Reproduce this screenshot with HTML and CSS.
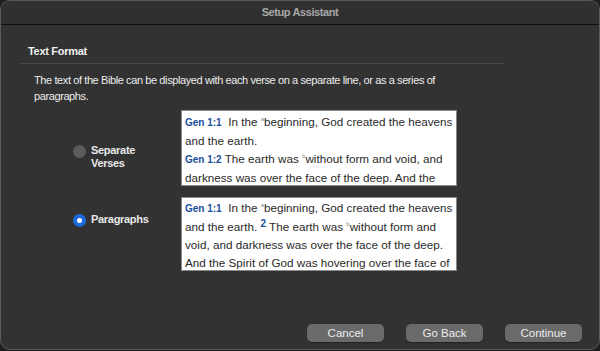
FILE: index.html
```html
<!DOCTYPE html>
<html lang="en">
<head>
    <meta charset="UTF-8">
    <title>Setup Assistant</title>
    <link rel="stylesheet" href="styles.css">
</head>
<body>
    <!-- Setup assistant window -->
    <div class="window">
        <div class="titlebar">Setup Assistant</div>

        <div class="content">
            <h2 class="section-title">Text Format</h2>
            <p class="intro">The text of the Bible can be displayed with each verse on a separate line, or as a series of paragraphs.</p>

            <!-- Format choices -->
            <div class="option">
                <label class="radio radio-verses">
                    <span class="radio-dot"></span>
                    <span class="radio-label">Separate<br>Verses</span>
                </label>
                <div class="preview">
                    <p><span class="ref">Gen 1:1</span>&nbsp; In the <sup>a</sup>beginning, God created the heavens<br>and the earth.</p>
                    <p><span class="ref">Gen 1:2</span> The earth was <sup>b</sup>without form and void, and<br>darkness was over the face of the deep. And the</p>
                </div>
            </div>

            <div class="option">
                <label class="radio radio-paragraphs">
                    <span class="radio-dot checked"></span>
                    <span class="radio-label">Paragraphs</span>
                </label>
                <div class="preview preview-short">
                    <p><span class="ref">Gen 1:1</span>&nbsp; In the <sup>a</sup>beginning, God created the heavens<br>and the earth. <span class="num">2</span> The earth was <sup>b</sup>without form and<br>void, and darkness was over the face of the deep.<br>And the Spirit of God was hovering over the face of</p>
                </div>
            </div>
        </div>

        <!-- Bottom buttons -->
        <div class="buttons">
            <button class="btn">Cancel</button>
            <button class="btn">Go Back</button>
            <button class="btn">Continue</button>
        </div>
    </div>
</body>
</html>
```

FILE: styles.css
```css
/* Page setup */
html, body {
    margin: 0;
    padding: 0;
    background-color: #1e1e1e;
}

body {
    font-family: "Liberation Sans", Arial, sans-serif;
    width: 600px;
    height: 351px;
    overflow: hidden;
}

/* Window frame */
.window {
    box-sizing: border-box;
    width: 600px;
    height: 350px;
    background-color: #323232;
    border: 1px solid #5a5a5a;
    border-radius: 10px;
    display: flex;
    flex-direction: column;
    overflow: hidden;
}

/* Title bar */
.titlebar {
    height: 23px;
    line-height: 23px;
    text-align: center;
    font-size: 11px;
    font-weight: bold;
    letter-spacing: -0.4px;
    color: #a8a8a8;
    background-color: #303030;
    border-bottom: 1px solid #101010;
}

/* Main content */
.content {
    flex: 1;
    padding: 0 94px 0 18px;
}

.section-title {
    margin: 19px 0 0 0;
    padding: 0 0 5px 9px;
    font-size: 11px;
    line-height: 14px;
    font-weight: bold;
    letter-spacing: -0.3px;
    color: #f0f0f0;
    border-bottom: 1px solid #474747;
}

.intro {
    max-width: 410px;
    margin: 8px 0 0 15px;
    font-size: 11px;
    line-height: 16px;
    letter-spacing: -0.4px;
    color: #ececec;
}

/* Option rows */
.option {
    display: flex;
    align-items: flex-start;
    margin-top: 6px;
}

.option + .option {
    margin-top: 11px;
}

.radio {
    display: flex;
    align-items: flex-start;
    width: 90px;
    margin-left: 54px;
    margin-right: 18px;
}

.radio-verses {
    margin-top: 34px;
}

.radio-paragraphs {
    margin-top: 16px;
}

.radio-dot {
    box-sizing: border-box;
    width: 13px;
    height: 13px;
    margin-top: 1px;
    border-radius: 50%;
    background-color: #5c5c5c;
    margin-right: 5px;
    flex-shrink: 0;
}

.radio-dot.checked {
    background-color: #1b6ae0;
    border: 4px solid #1b6ae0;
    background-clip: padding-box;
    position: relative;
}

.radio-dot.checked::after {
    content: "";
    position: absolute;
    inset: 0;
    border-radius: 50%;
    background-color: #ffffff;
}

.radio-label {
    font-size: 11px;
    line-height: 13px;
    font-weight: bold;
    letter-spacing: -0.3px;
    color: #e8e8e8;
}

/* Sample text box */
.preview {
    box-sizing: border-box;
    width: 276px;
    height: 76px;
    padding: 2px 0 0 3px;
    background-color: #ffffff;
    border: 1px solid #8a8a8a;
    overflow: hidden;
    color: #2a2a2a;
    font-size: 11.7px;
    line-height: 18px;
}

.preview-short {
    height: 74px;
    padding-top: 1px;
}

.preview p {
    margin: 0;
    white-space: nowrap;
}

.ref {
    color: #1c4f9c;
    font-weight: bold;
    font-size: 10px;
}

.num {
    color: #1c4f9c;
    font-weight: bold;
    font-size: 10px;
    line-height: 0;
    vertical-align: 4px;
}

sup {
    font-size: 6px;
    color: #8a8a8a;
    vertical-align: 5px;
    line-height: 0;
}

/* Button row */
.buttons {
    display: flex;
    justify-content: flex-end;
    gap: 22px;
    padding: 0 17px 7px 0;
}

.btn {
    width: 77px;
    height: 18px;
    padding: 0;
    border: none;
    border-radius: 5px;
    background-color: #6a6a6a;
    color: #ececec;
    font-family: "Liberation Sans", Arial, sans-serif;
    font-size: 11.5px;
    box-shadow: 0 1px 1px rgba(0, 0, 0, 0.3);
}
```
